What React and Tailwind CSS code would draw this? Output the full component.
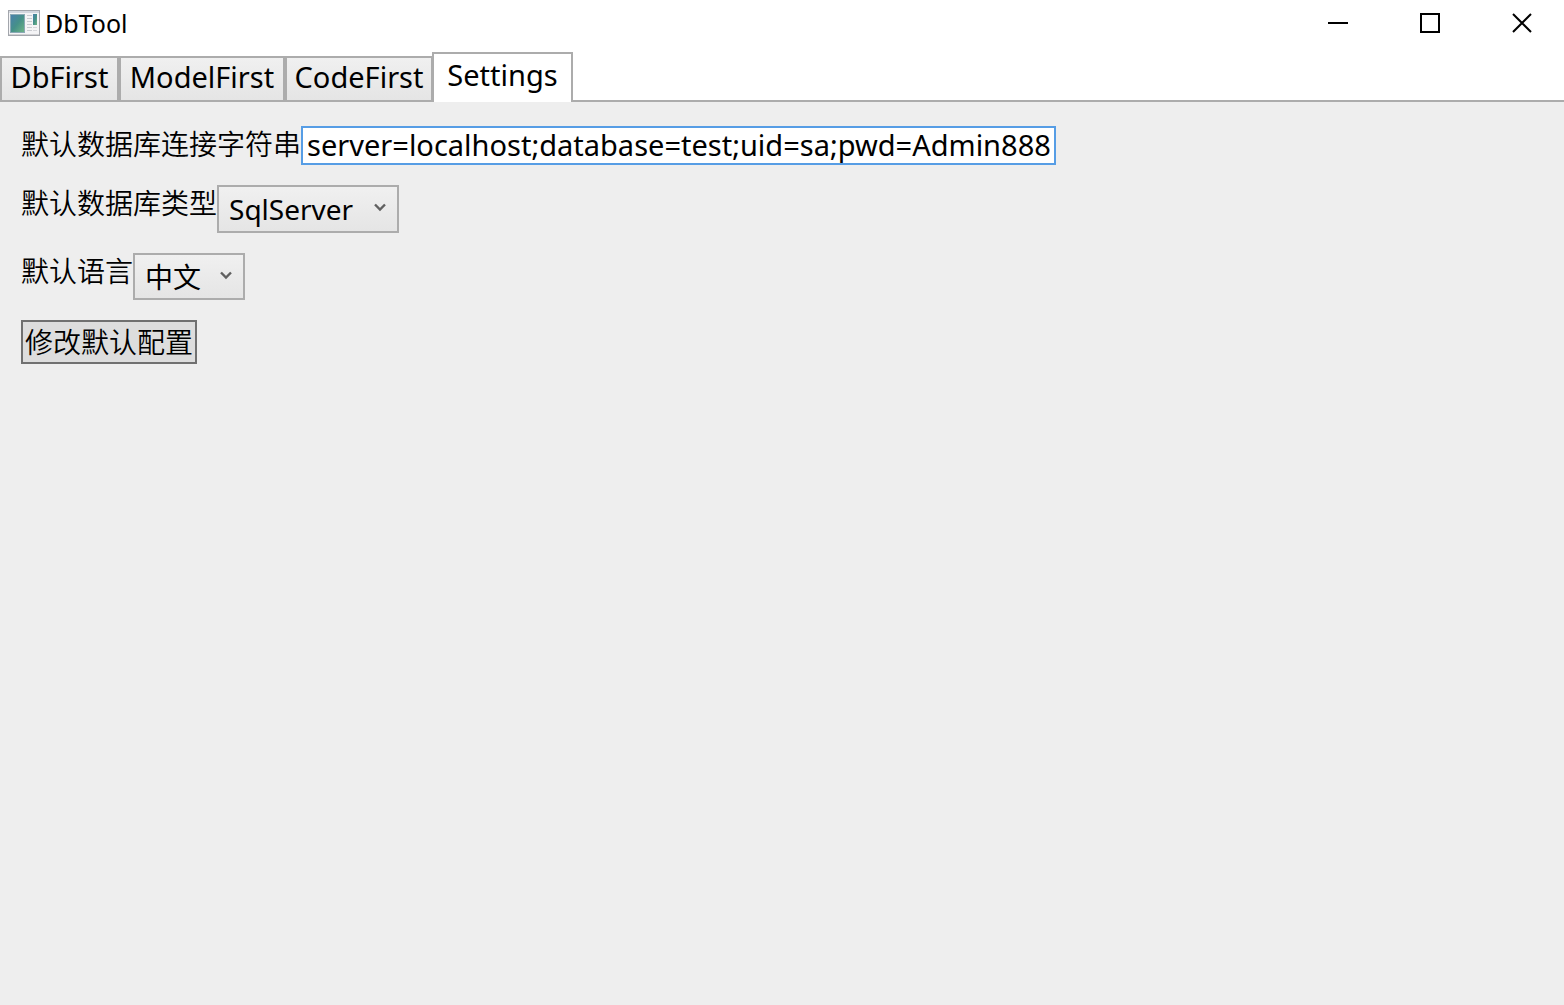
import { useState } from "react";

const TABS = [
  { name: "DbFirst", width: "w-[119px]" },
  { name: "ModelFirst", width: "w-[166px]" },
  { name: "CodeFirst", width: "w-[148px]" },
  { name: "Settings", width: "w-[141px]" },
];

// ── Title bar ─────────────────────────────────────────────────
function AppIcon() {
  return (
    <svg width="32" height="26" viewBox="0 0 32 26" aria-hidden="true">
      <defs>
        <linearGradient id="screen" x1="0" y1="0" x2="1" y2="1">
          <stop offset="0" stopColor="#4a7fae" />
          <stop offset="0.5" stopColor="#459089" />
          <stop offset="1" stopColor="#6fb585" />
        </linearGradient>
      </defs>
      <rect x="0.5" y="0.5" width="31" height="25" fill="#f4f4f6" stroke="#a3a6ac" />
      <rect x="1" y="1" width="30" height="2" fill="#d3d7df" />
      <rect x="2.5" y="4.5" width="14" height="18" fill="url(#screen)" stroke="#8aa9b5" />
      <path d="M19 5.5h5M19 8.5h5M19 11.5h5M19 14.5h5M19 17.5h5M19 20.5h5" stroke="#c9cbd0" />
      <rect x="25" y="4" width="4" height="11" fill="url(#screen)" />
      <path d="M25 17.5h4M25 20.5h4" stroke="#d6d7db" />
      <path d="M1 24.5h30" stroke="#d0d0d3" />
    </svg>
  );
}

function TitleBar() {
  return (
    <header className="flex h-[46px] items-center justify-between bg-white pl-2">
      <div className="flex items-center gap-[5px]">
        <AppIcon />
        <h1 className="text-[25px] leading-[32px]">DbTool</h1>
      </div>
      <div className="flex h-full">
        <button type="button" aria-label="Minimize" className="flex w-[92px] items-center justify-center">
          <svg width="20" height="20" viewBox="0 0 20 20" stroke="#000" strokeWidth="2">
            <path d="M0 10h20" />
          </svg>
        </button>
        <button type="button" aria-label="Maximize" className="flex w-[92px] items-center justify-center">
          <svg width="20" height="20" viewBox="0 0 20 20" fill="none" stroke="#000" strokeWidth="2">
            <rect x="1" y="1" width="18" height="18" />
          </svg>
        </button>
        <button type="button" aria-label="Close" className="flex w-[88px] items-center justify-center pl-1">
          <svg width="20" height="20" viewBox="0 0 20 20" stroke="#000" strokeWidth="2">
            <path d="M1 1l18 18M19 1L1 19" />
          </svg>
        </button>
      </div>
    </header>
  );
}

// ── Tabs ──────────────────────────────────────────────────────
function TabBar({ active, onSelect }) {
  return (
    <div role="tablist" className="flex h-14 items-end border-b-2 border-[#acacac] bg-white text-[29px]">
      {TABS.map((tab) => (
        <button
          key={tab.name}
          type="button"
          role="tab"
          aria-selected={tab.name === active}
          onClick={() => onSelect(tab.name)}
          className={`${tab.width} border-2 border-b-0 border-[#acacac] text-center ${
            tab.name === active
              ? "relative -mb-[2px] -ml-px h-[50px] bg-white pb-[6px]"
              : "h-11 bg-linear-to-b from-[#f0f0f0] to-[#e5e5e5] pb-1"
          }`}
        >
          {tab.name}
        </button>
      ))}
    </div>
  );
}

// ── Form parts ────────────────────────────────────────────────
function Row({ id, label, children }) {
  return (
    <div className="flex items-start">
      <label htmlFor={id} className="leading-[36px] font-[350]">
        {label}
      </label>
      {children}
    </div>
  );
}

function Select({ id, size, options }) {
  return (
    <div className="relative">
      <select
        id={id}
        className={`${size} block appearance-none border-2 border-[#acacac] bg-linear-to-b from-[#f0f0f0] to-[#e5e5e5] pl-[10px]`}
      >
        {options.map((option) => (
          <option key={option}>{option}</option>
        ))}
      </select>
      <svg
        className="pointer-events-none absolute top-[18px] right-[13px]"
        width="12"
        height="10"
        viewBox="0 0 12 10"
        fill="none"
        stroke="#606060"
        strokeWidth="2.4"
      >
        <path d="M1 1.5l5 5 5-5" />
      </svg>
    </div>
  );
}

function SettingsPanel() {
  return (
    <form className="flex flex-col items-start gap-5 px-[21px] pt-6" onSubmit={(e) => e.preventDefault()}>
      <Row id="connection" label="默认数据库连接字符串">
        <input
          id="connection"
          type="text"
          defaultValue="server=localhost;database=test;uid=sa;pwd=Admin888"
          className="h-[39px] w-[755px] border-2 border-[#569de5] bg-white px-1 pb-[2px] text-[29px] outline-none"
        />
      </Row>
      <Row id="dbtype" label="默认数据库类型">
        <Select id="dbtype" size="h-12 w-[182px]" options={["SqlServer", "MySql", "PostgreSql"]} />
      </Row>
      <Row id="language" label="默认语言">
        <Select id="language" size="h-[47px] w-[112px]" options={["中文", "English"]} />
      </Row>
      <button type="submit" className="h-11 border-2 border-[#707070] bg-[#dddddd] px-[2px] font-[350]">
        修改默认配置
      </button>
    </form>
  );
}

export default function App() {
  const [active, setActive] = useState("Settings");

  return (
    <div className="flex min-h-screen flex-col bg-[#eeeeee] font-['Noto_Sans','Noto_Sans_CJK_SC',sans-serif] text-[28px] leading-[38px] text-black">
      <TitleBar />
      <TabBar active={active} onSelect={setActive} />
      <main className="flex-1">{active === "Settings" && <SettingsPanel />}</main>
    </div>
  );
}
